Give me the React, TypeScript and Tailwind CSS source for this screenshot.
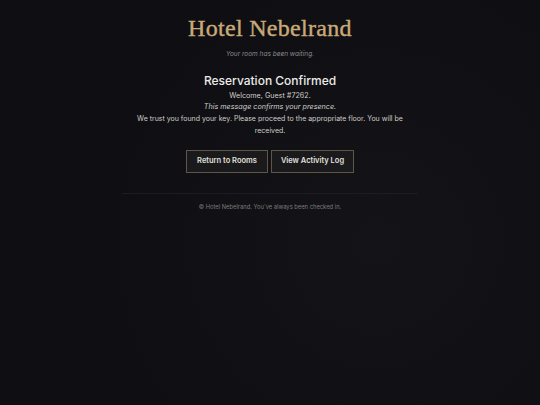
export default function App() {
  return (
    <div className="min-h-screen w-full bg-[#0f0f13] bg-[radial-gradient(circle_at_70%_60%,#131318_0%,#0f0f13_60%)] text-[#d8d6d2] font-['Inter','Noto_Sans',sans-serif]">
      <div className="mx-auto flex w-[296px] flex-col items-center pt-[14px] text-center">
        <h1 className="font-['Liberation_Serif','DejaVu_Serif',serif] text-[24px] leading-[28px] tracking-[0.3px] text-[#c8a978] [-webkit-text-stroke:0.4px_#c8a978]">
          Hotel Nebelrand
        </h1>
        <p className="mt-[8px] text-[6.5px] italic text-[#8a8886]">Your room has been waiting.</p>

        <h2 className="mt-[13px] text-[12px] font-medium leading-[15px] text-[#ecebe8]">Reservation Confirmed</h2>
        <p className="mt-[2px] text-[7.2px] leading-[11.7px] text-[#cfcdc9]">Welcome, Guest #7262.</p>
        <p className="text-[7.2px] italic leading-[11.7px] text-[#cfcdc9]">This message confirms your presence.</p>
        <p className="w-[280px] text-[7px] leading-[11.7px] text-[#cfcdc9]">
          We trust you found your key. Please proceed to the appropriate floor. You will be received.
        </p>

        <div className="mt-[13px] flex gap-[3px]">
          <button className="h-[23px] w-[82px] border border-[#5e5646] bg-[#1a1a1d] text-[7.5px] font-semibold text-[#e2e0dc]">
            Return to Rooms
          </button>
          <button className="h-[23px] w-[83px] border border-[#5e5646] bg-[#1a1a1d] text-[7.5px] font-semibold text-[#e2e0dc]">
            View Activity Log
          </button>
        </div>

        <div className="mt-[20px] h-px w-full bg-[#1b1b20]" />
        <p className="mt-[9px] text-[5.8px] text-[#7d7b79]">© Hotel Nebelrand. You've always been checked in.</p>
      </div>
    </div>
  )
}
